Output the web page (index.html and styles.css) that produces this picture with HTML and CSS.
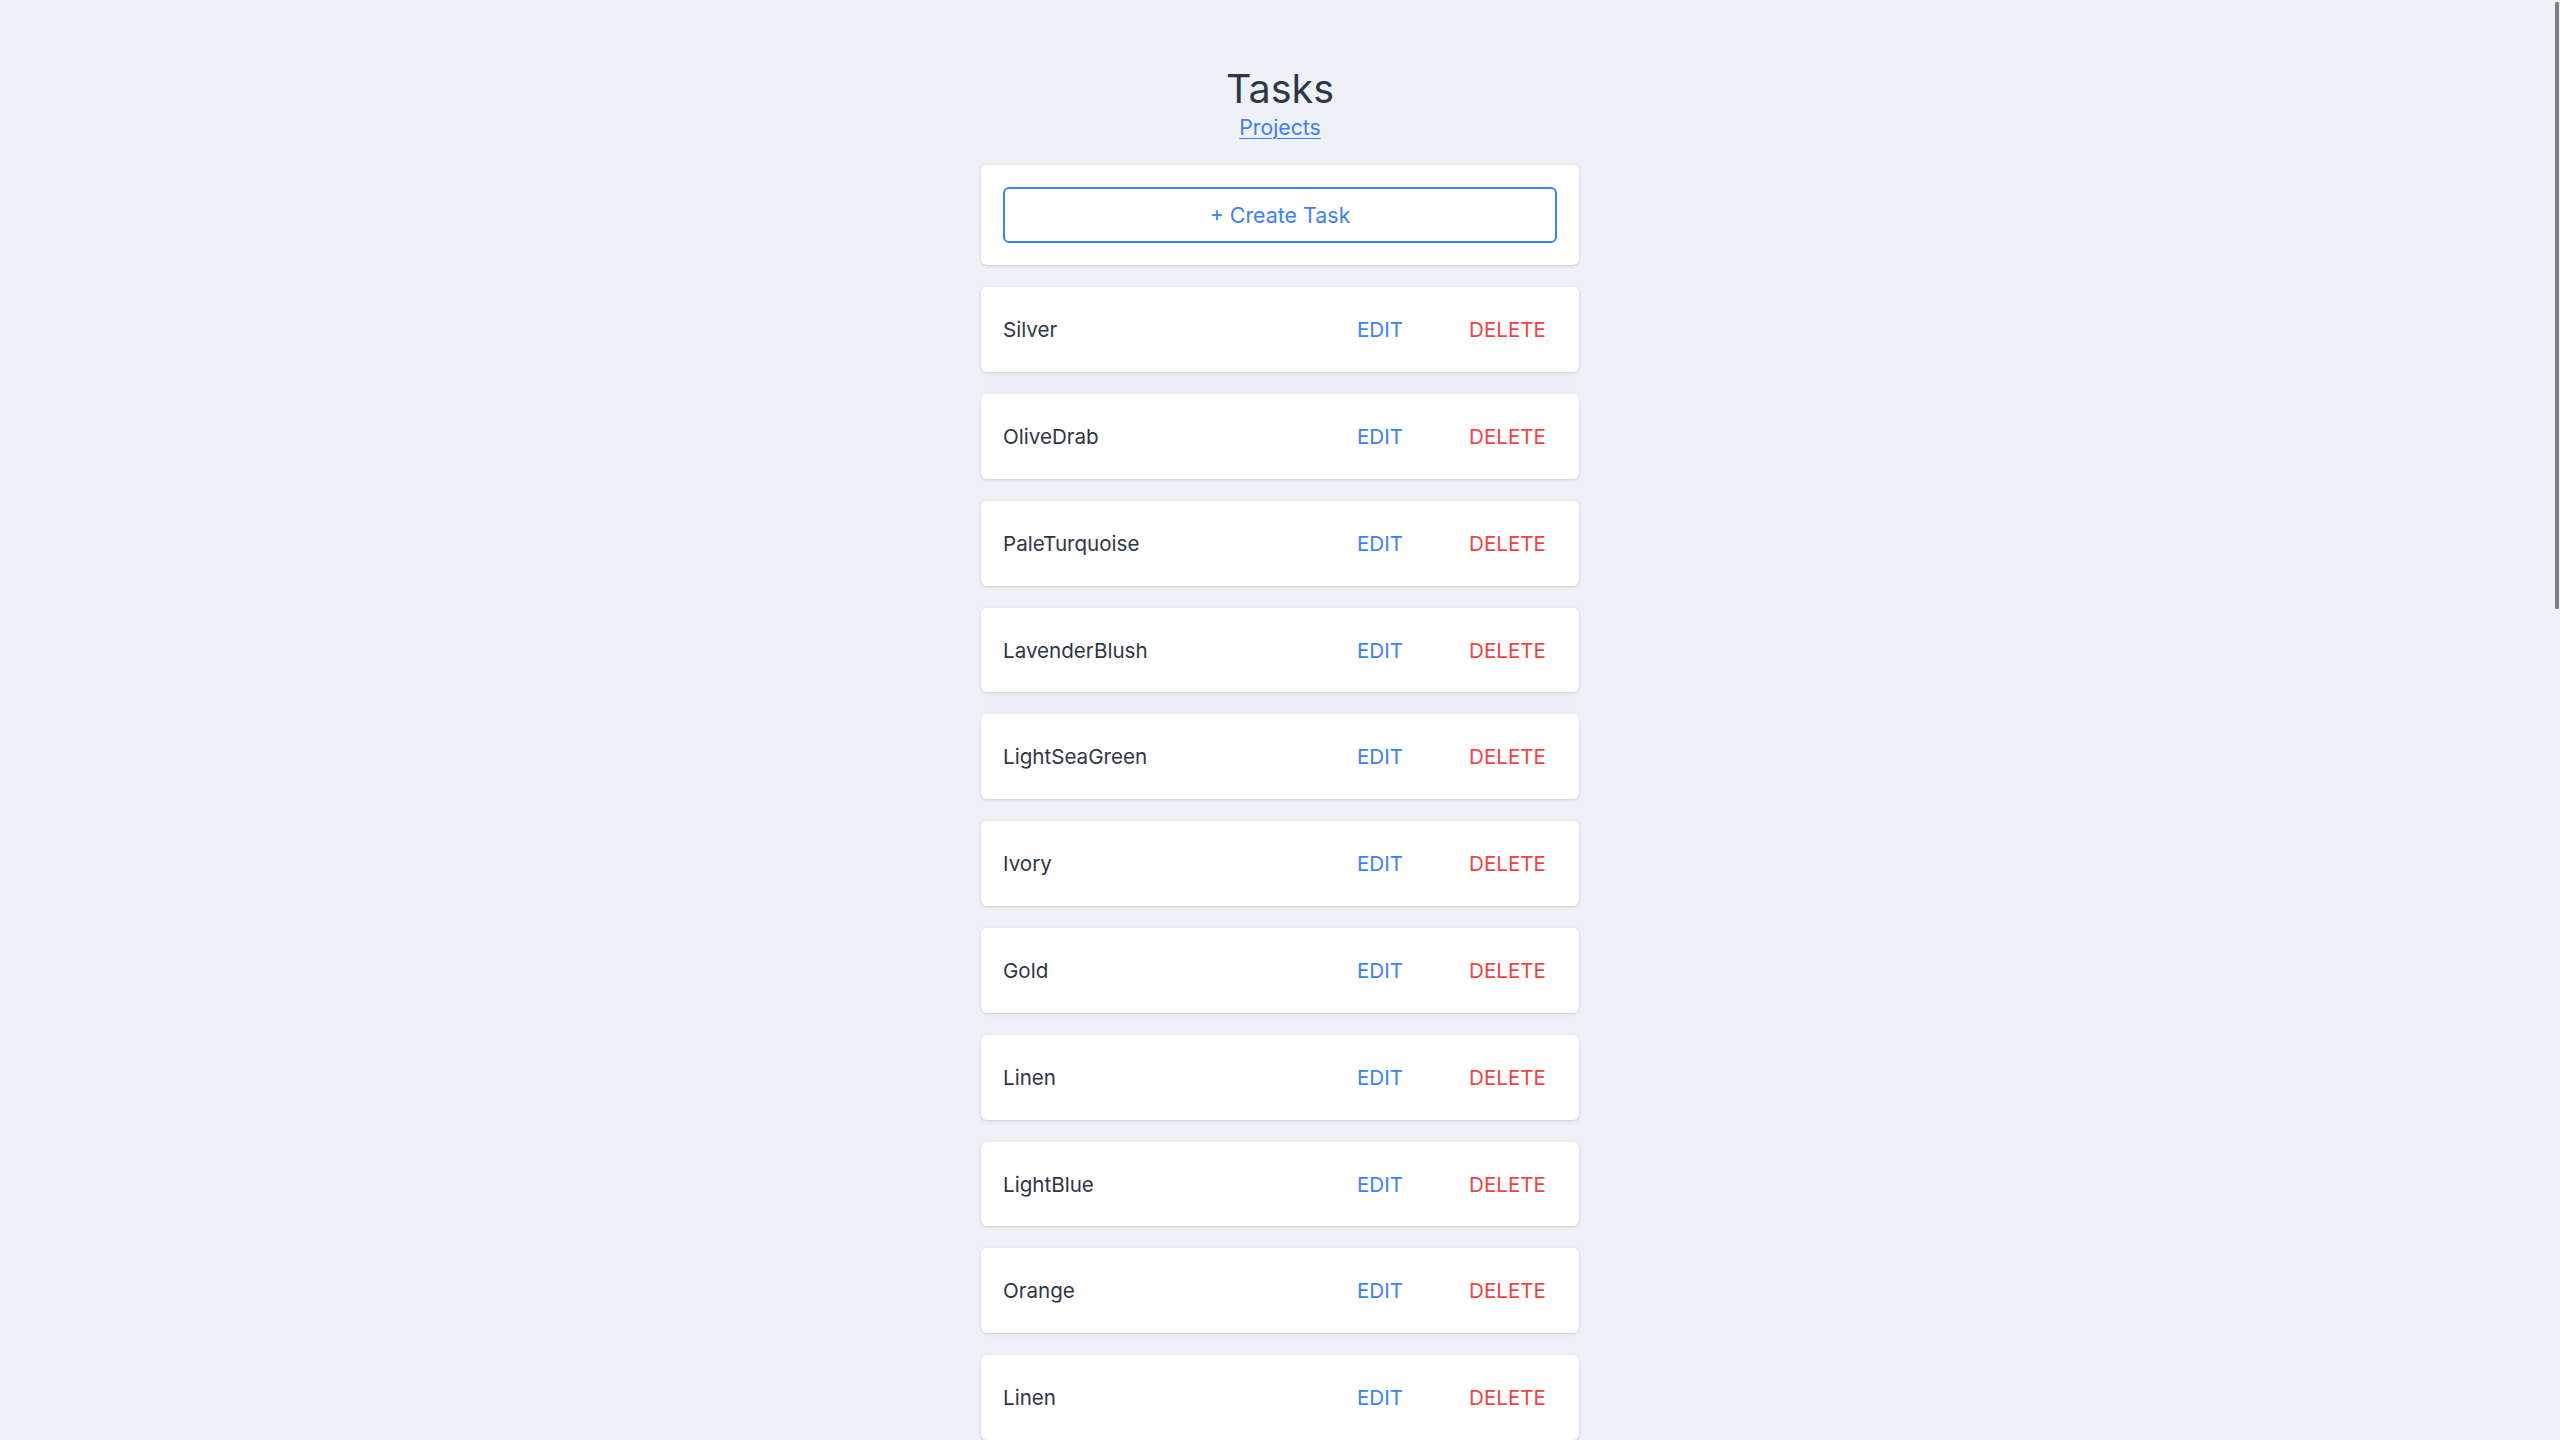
FILE: index.html
```html
<!DOCTYPE html>
<html lang="en">
<head>
<meta charset="utf-8">
<title>Tasks</title>
<link rel="stylesheet" href="styles.css">
</head>
<body>
<main class="page">
  <header class="header">
    <h1 class="title">Tasks</h1>
    <a class="nav-link" href="#">Projects</a>
  </header>
  <section class="card create-card">
    <button class="create-btn">+ Create Task</button>
  </section>
  <ul class="task-list">
    <li class="card task"><span class="task-name">Silver</span><button class="act edit">EDIT</button><button class="act delete">DELETE</button></li>
    <li class="card task"><span class="task-name">OliveDrab</span><button class="act edit">EDIT</button><button class="act delete">DELETE</button></li>
    <li class="card task"><span class="task-name">PaleTurquoise</span><button class="act edit">EDIT</button><button class="act delete">DELETE</button></li>
    <li class="card task"><span class="task-name">LavenderBlush</span><button class="act edit">EDIT</button><button class="act delete">DELETE</button></li>
    <li class="card task"><span class="task-name">LightSeaGreen</span><button class="act edit">EDIT</button><button class="act delete">DELETE</button></li>
    <li class="card task"><span class="task-name">Ivory</span><button class="act edit">EDIT</button><button class="act delete">DELETE</button></li>
    <li class="card task"><span class="task-name">Gold</span><button class="act edit">EDIT</button><button class="act delete">DELETE</button></li>
    <li class="card task"><span class="task-name">Linen</span><button class="act edit">EDIT</button><button class="act delete">DELETE</button></li>
    <li class="card task"><span class="task-name">LightBlue</span><button class="act edit">EDIT</button><button class="act delete">DELETE</button></li>
    <li class="card task"><span class="task-name">Orange</span><button class="act edit">EDIT</button><button class="act delete">DELETE</button></li>
    <li class="card task"><span class="task-name">Linen</span><button class="act edit">EDIT</button><button class="act delete">DELETE</button></li>
    <li class="card task"><span class="task-name">Tomato</span><button class="act edit">EDIT</button><button class="act delete">DELETE</button></li>
    <li class="card task"><span class="task-name">SteelBlue</span><button class="act edit">EDIT</button><button class="act delete">DELETE</button></li>
    <li class="card task"><span class="task-name">Khaki</span><button class="act edit">EDIT</button><button class="act delete">DELETE</button></li>
    <li class="card task"><span class="task-name">MintCream</span><button class="act edit">EDIT</button><button class="act delete">DELETE</button></li>
    <li class="card task"><span class="task-name">Crimson</span><button class="act edit">EDIT</button><button class="act delete">DELETE</button></li>
    <li class="card task"><span class="task-name">Teal</span><button class="act edit">EDIT</button><button class="act delete">DELETE</button></li>
    <li class="card task"><span class="task-name">Plum</span><button class="act edit">EDIT</button><button class="act delete">DELETE</button></li>
    <li class="card task"><span class="task-name">SandyBrown</span><button class="act edit">EDIT</button><button class="act delete">DELETE</button></li>
    <li class="card task"><span class="task-name">Azure</span><button class="act edit">EDIT</button><button class="act delete">DELETE</button></li>
    <li class="card task"><span class="task-name">DarkOrchid</span><button class="act edit">EDIT</button><button class="act delete">DELETE</button></li>
    <li class="card task"><span class="task-name">Honeydew</span><button class="act edit">EDIT</button><button class="act delete">DELETE</button></li>
    <li class="card task"><span class="task-name">Sienna</span><button class="act edit">EDIT</button><button class="act delete">DELETE</button></li>
    <li class="card task"><span class="task-name">CornflowerBlue</span><button class="act edit">EDIT</button><button class="act delete">DELETE</button></li>
    <li class="card task"><span class="task-name">Wheat</span><button class="act edit">EDIT</button><button class="act delete">DELETE</button></li>
    <li class="card task"><span class="task-name">SeaShell</span><button class="act edit">EDIT</button><button class="act delete">DELETE</button></li>
    <li class="card task"><span class="task-name">Peru</span><button class="act edit">EDIT</button><button class="act delete">DELETE</button></li>
    <li class="card task"><span class="task-name">Thistle</span><button class="act edit">EDIT</button><button class="act delete">DELETE</button></li>
    <li class="card task"><span class="task-name">Navy</span><button class="act edit">EDIT</button><button class="act delete">DELETE</button></li>
  </ul>
</main>
<div class="scroll-thumb"></div>
</body>
</html>
```
FILE: styles.css
```css
html {
  scrollbar-width: none;
  background: #eef2f7;
}
html::-webkit-scrollbar {
  display: none;
}
body {
  margin: 0;
  background: #eef2f7;
  font-family: Inter, "Noto Sans", "Liberation Sans", sans-serif;
  color: #2d3748;
}
.page {
  width: 598px;
  margin: 0 auto;
  padding: 66px 0 44px;
  display: flex;
  flex-direction: column;
}
.header {
  display: flex;
  flex-direction: column;
  align-items: center;
  margin-bottom: 25px;
}
.title {
  margin: 0;
  font-size: 39.5px;
  font-weight: 400;
  line-height: 1.21;
  color: #2d3748;
}
.nav-link {
  font-size: 21.2px;
  line-height: 1.25;
  color: #3b7ff0;
  text-decoration: underline;
  text-underline-offset: 3px;
  text-decoration-thickness: 1px;
}
.card {
  background: #ffffff;
  border-radius: 6px;
  box-shadow: 0 1px 4px rgba(0, 0, 0, 0.1), 0 1px 2px rgba(0, 0, 0, 0.06);
}
.create-card {
  padding: 22px;
  margin-bottom: 22px;
}
.create-btn {
  display: block;
  width: 100%;
  height: 56px;
  background: #ffffff;
  border: 2px solid #3b82f6;
  border-radius: 6px;
  font-family: inherit;
  font-size: 21.4px;
  color: #3b82f6;
  cursor: pointer;
}
.task-list {
  list-style: none;
  margin: 0;
  padding: 0;
  display: flex;
  flex-direction: column;
  gap: 22px;
}
.task {
  box-sizing: border-box;
  height: 84.8px;
  padding: 0 33px 0 22px;
  display: flex;
  align-items: center;
}
.task-name {
  flex: 1;
  font-size: 20.6px;
  color: #2d3748;
}
.act {
  background: none;
  border: 0;
  padding: 0;
  font-family: inherit;
  font-size: 20.6px;
  cursor: pointer;
}
.edit {
  color: #3b82f6;
  margin-right: 66px;
}
.delete {
  color: #ef4444;
}
.scroll-thumb {
  position: fixed;
  top: 2px;
  right: 1px;
  width: 4px;
  height: 607px;
  background: #808080;
  border-radius: 1px;
}
```
